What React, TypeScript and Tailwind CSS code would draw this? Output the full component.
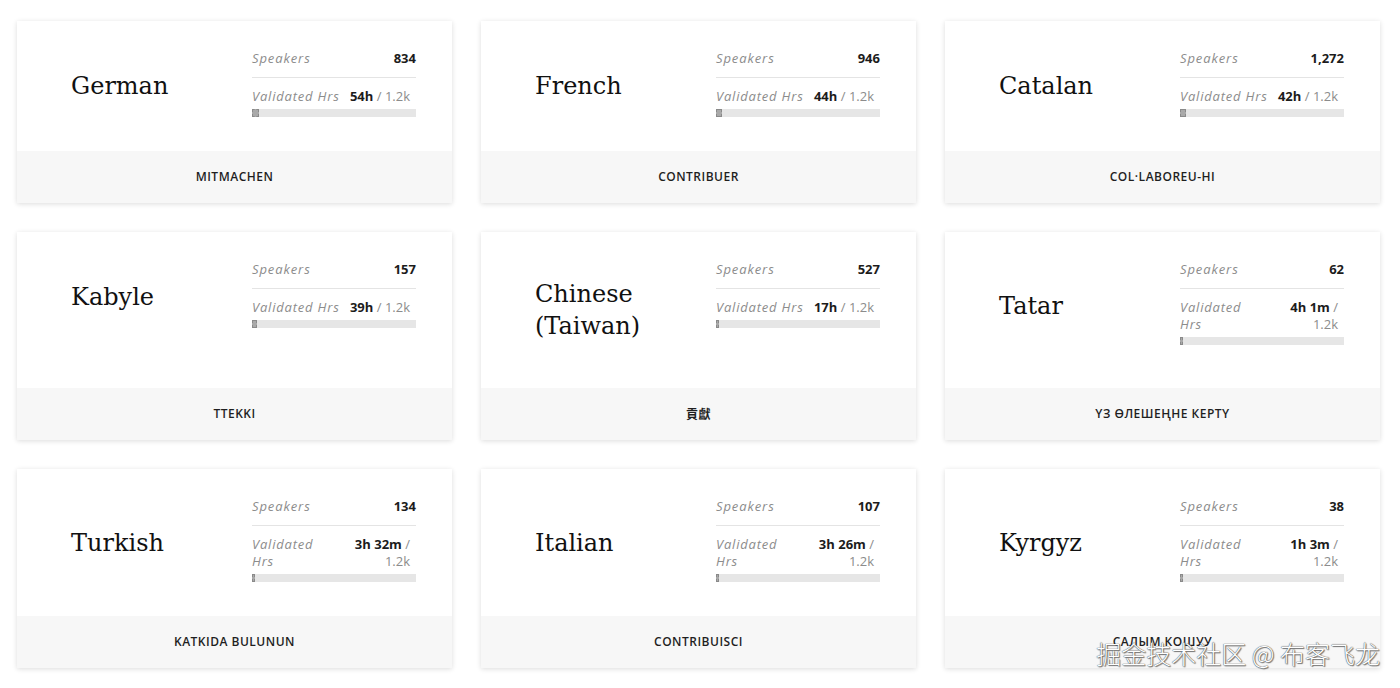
import React from "react";

type Lang = {
  name: string;
  speakers: string;
  hours: number;
  validated: string;
  cta: string;
  wrap?: boolean;
  cjk?: boolean;
};

const languages: Lang[] = [
  { name: "German", speakers: "834", hours: 54, validated: "54h", cta: "Mitmachen" },
  { name: "French", speakers: "946", hours: 44, validated: "44h", cta: "Contribuer" },
  { name: "Catalan", speakers: "1,272", hours: 42, validated: "42h", cta: "Col·laboreu-hi" },
  { name: "Kabyle", speakers: "157", hours: 39, validated: "39h", cta: "Ttekki" },
  { name: "Chinese (Taiwan)", speakers: "527", hours: 17, validated: "17h", cta: "貢獻", cjk: true },
  { name: "Tatar", speakers: "62", hours: 4, validated: "4h 1m", cta: "Үз өлешеңне кертү", wrap: true },
  { name: "Turkish", speakers: "134", hours: 3.5, validated: "3h 32m", cta: "Katkıda bulunun", wrap: true },
  { name: "Italian", speakers: "107", hours: 3.4, validated: "3h 26m", cta: "Contribuisci", wrap: true },
  { name: "Kyrgyz", speakers: "38", hours: 1, validated: "1h 3m", cta: "Салым кошуу", wrap: true },
];

const GOAL = 1200;
const BAR_W = 164;

function LanguageCard({ lang }: { lang: Lang }) {
  const fill = Math.max((lang.hours / GOAL) * BAR_W, 3);

  return (
    <div className="flex flex-col bg-white shadow-[0_1px_5px_rgba(0,0,0,0.14)]">
      {/* body */}
      <div className="flex justify-between pl-[54px] pr-[36px]">
        <div className="self-center py-[46px] pr-4 font-['DejaVu_Serif',serif] text-[24px] leading-[32px] text-[#111]">
          {lang.name}
        </div>

        <div className="w-[164px] shrink-0 pt-[29px] pb-[34px] font-['Open_Sans',sans-serif] text-[13px] leading-[17px]">
          <div className="flex justify-between border-b border-[#e4e4e4] pb-[10px]">
            <span className="italic tracking-[0.9px] text-[#8c8c8c]">Speakers</span>
            <span className="font-bold text-[#1c1c1c]">{lang.speakers}</span>
          </div>

          <div className="flex justify-between pt-[10px] pr-[6px]">
            <span className="italic tracking-[0.8px] text-[#8c8c8c]">
              {lang.wrap ? (
                <>
                  Validated
                  <br />
                  Hrs
                </>
              ) : (
                "Validated Hrs"
              )}
            </span>
            <span className="text-right text-[#8c8c8c]">
              <b className="font-bold text-[#1c1c1c]">{lang.validated}</b>
              {lang.wrap ? (
                <>
                  {" /"}
                  <br />
                  1.2k
                </>
              ) : (
                " / 1.2k"
              )}
            </span>
          </div>

          <div className="mt-[4px] h-[8px] w-full bg-[#e6e6e6]">
            <div
              className="h-full border border-dashed border-[#8a8a8a] bg-[#a9a9a9]"
              style={{ width: fill }}
            />
          </div>
        </div>
      </div>

      {/* footer */}
      <div
        className={`mt-auto flex h-[52px] items-center justify-center bg-[#f7f7f7] text-[12px] font-semibold uppercase tracking-[0.5px] text-[#1f1f1f] ${
          lang.cjk
            ? "font-['Noto_Sans_CJK_TC',sans-serif]"
            : "font-['Open_Sans',sans-serif]"
        }`}
      >
        {lang.cta}
      </div>
    </div>
  );
}

export default function App() {
  return (
    <div className="relative min-h-screen bg-white pt-[21px] pl-[17px] pr-[20px]">
      <div className="grid grid-cols-3 gap-x-[29px] gap-y-[29px]">
        {languages.map((lang, index) => (
          <LanguageCard key={index} lang={lang} />
        ))}
      </div>

      {/* watermark */}
      <div className="absolute right-[20px] top-[635px] font-['Noto_Sans_CJK_SC',sans-serif] text-[25px] font-light leading-[36px] text-white [text-shadow:0_0_1px_#555,0_0_1px_#555,1px_1px_1px_#777]">
        掘金技术社区 @ 布客飞龙
      </div>
    </div>
  );
}
